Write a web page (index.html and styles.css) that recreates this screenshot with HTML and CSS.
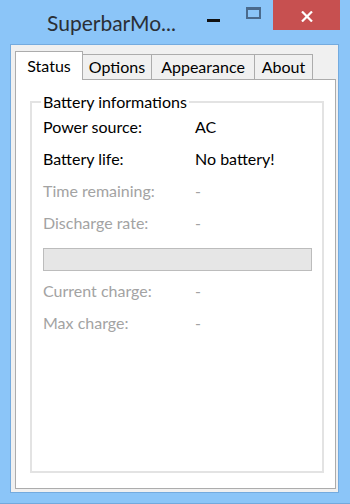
FILE: index.html
```html
<!DOCTYPE html>
<html lang="en">

<head>
    <meta charset="UTF-8" />
    <meta name="viewport" content="width=device-width, initial-scale=1.0" />
    <title>SuperbarMonitor</title>
    <link rel="stylesheet" href="styles.css">
</head>

<body>
    <div class="window">
        <div class="titlebar">
            <div class="title">SuperbarMo...</div>
            <div class="caption-buttons">
                <div class="cap-btn"><span class="min-glyph"></span></div>
                <div class="cap-btn"><span class="max-glyph"></span></div>
                <div class="cap-btn close">
                    <svg width="12" height="11" viewBox="0 0 12 11">
                        <path d="M1 0.5 L11 10.5 M11 0.5 L1 10.5" stroke="#ffffff" stroke-width="2.2" fill="none" />
                    </svg>
                </div>
            </div>
        </div>

        <div class="client">
            <div class="tabs">
                <div class="tab active">Status</div>
                <div class="tab tab-options">Options</div>
                <div class="tab tab-appearance">Appearance</div>
                <div class="tab tab-about">About</div>
            </div>

            <div class="tab-panel">
                <fieldset class="group">
                    <legend>Battery informations</legend>
                    <div class="info-grid">
                        <div class="label">Power source:</div>
                        <div class="value">AC</div>
                        <div class="label">Battery life:</div>
                        <div class="value">No battery!</div>
                        <div class="label disabled">Time remaining:</div>
                        <div class="value disabled">-</div>
                        <div class="label disabled">Discharge rate:</div>
                        <div class="value disabled">-</div>
                    </div>
                    <div class="progress"></div>
                    <div class="info-grid">
                        <div class="label disabled">Current charge:</div>
                        <div class="value disabled">-</div>
                        <div class="label disabled">Max charge:</div>
                        <div class="value disabled">-</div>
                    </div>
                </fieldset>
            </div>
        </div>
    </div>
</body>

</html>
```

FILE: styles.css
```css
body {
    margin: 0;
    font-family: 'Lato', 'Liberation Sans', sans-serif;
    background-color: #8bc5f8;
}

.window {
    width: 350px;
    height: 504px;
    box-sizing: border-box;
    display: flex;
    flex-direction: column;
    background-color: #8bc5f8;
    border-bottom: 1px solid #72a9dd;
}

/* barra de titulo */
.titlebar {
    height: 44px;
    display: flex;
    justify-content: space-between;
    flex-shrink: 0;
}

.title {
    padding: 11px 0 0 47px;
    font-size: 21px;
    line-height: 24px;
    color: #2a2f36;
}

.caption-buttons {
    display: flex;
    height: 30px;
    margin-right: 10px;
}

.cap-btn {
    display: flex;
    align-items: center;
    justify-content: center;
    width: 39px;
}

.cap-btn + .cap-btn {
    width: 40px;
}

.cap-btn.close {
    width: 67px;
    background-color: #c75050;
    padding-top: 2px;
    box-sizing: border-box;
}

.min-glyph {
    width: 13px;
    height: 3px;
    background-color: #111111;
    margin-top: 10px;
}

.max-glyph {
    width: 15px;
    height: 12px;
    box-sizing: border-box;
    border: 2px solid #4a6a8c;
    border-top-width: 3px;
    margin-top: -4px;
}

/* area do cliente */
.client {
    flex: 1;
    margin: 0 11px 10px 10px;
    border: 1px solid #74abdf;
    background-color: #f0f0f0;
    padding: 6px 2px 3px 4px;
    display: flex;
    flex-direction: column;
}

.tabs {
    display: flex;
    align-items: flex-end;
    height: 28px;
    flex-shrink: 0;
}

.tab {
    height: 25px;
    box-sizing: border-box;
    border: 1px solid #acacac;
    border-bottom: none;
    background-color: #f0f0f0;
    font-size: 16px;
    line-height: 24px;
    text-align: center;
    color: #000000;
}

.tab + .tab {
    margin-left: -1px;
}

.tab.active {
    width: 68px;
    height: 29px;
    margin-bottom: -1px;
    background-color: #ffffff;
    line-height: 27px;
    position: relative;
    z-index: 1;
}

.tab-options {
    width: 70px;
}

.tab-appearance {
    width: 104px;
}

.tab-about {
    width: 59px;
}

.tab-panel {
    flex: 1;
    background-color: #ffffff;
    border: 1px solid #acacac;
    padding: 0 11px 15px 14px;
    display: flex;
    flex-direction: column;
}

.group {
    flex: 1;
    margin: 13px 0 0 0;
    padding: 0 10px 0 11px;
    border: 2px solid #e3e3e3;
    min-width: 0;
}

.group legend {
    padding: 0 2px;
    margin-left: -2px;
    font-size: 16px;
    line-height: 18px;
    color: #000000;
}

.info-grid {
    display: grid;
    grid-template-columns: 152px 1fr;
    grid-auto-rows: 32px;
    font-size: 16px;
    line-height: 32px;
    color: #000000;
}

.disabled {
    color: #a3a3a3;
}

.progress {
    height: 23px;
    box-sizing: border-box;
    margin: 9px 0 4px 0;
    background-color: #e6e6e6;
    border: 1px solid #bcbcbc;
}
```
